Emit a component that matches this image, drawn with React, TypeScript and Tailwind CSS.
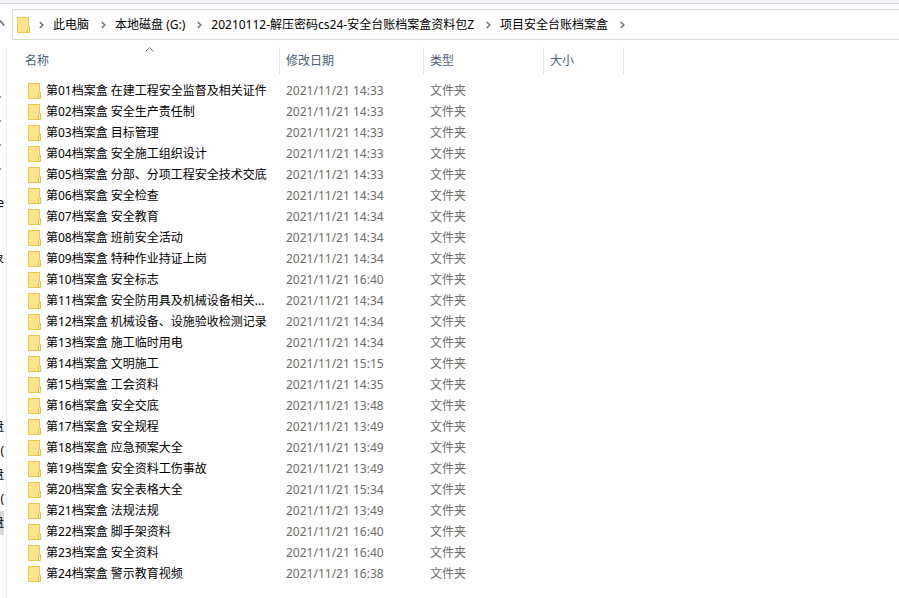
import { useState } from 'react';

const crumbs = ['此电脑', '本地磁盘 (G:)', '20210112-解压密码cs24-安全台账档案盒资料包Z', '项目安全台账档案盒'];

const folders = [
  { name: '第01档案盒 在建工程安全监督及相关证件', date: '2021/11/21 14:33' },
  { name: '第02档案盒 安全生产责任制', date: '2021/11/21 14:33' },
  { name: '第03档案盒 目标管理', date: '2021/11/21 14:33' },
  { name: '第04档案盒 安全施工组织设计', date: '2021/11/21 14:33' },
  { name: '第05档案盒 分部、分项工程安全技术交底', date: '2021/11/21 14:33' },
  { name: '第06档案盒 安全检查', date: '2021/11/21 14:34' },
  { name: '第07档案盒 安全教育', date: '2021/11/21 14:34' },
  { name: '第08档案盒 班前安全活动', date: '2021/11/21 14:34' },
  { name: '第09档案盒 特种作业持证上岗', date: '2021/11/21 14:34' },
  { name: '第10档案盒 安全标志', date: '2021/11/21 16:40' },
  { name: '第11档案盒 安全防用具及机械设备相关...', date: '2021/11/21 14:34' },
  { name: '第12档案盒 机械设备、设施验收检测记录', date: '2021/11/21 14:34' },
  { name: '第13档案盒 施工临时用电', date: '2021/11/21 14:34' },
  { name: '第14档案盒 文明施工', date: '2021/11/21 15:15' },
  { name: '第15档案盒 工会资料', date: '2021/11/21 14:35' },
  { name: '第16档案盒 安全交底', date: '2021/11/21 13:48' },
  { name: '第17档案盒 安全规程', date: '2021/11/21 13:49' },
  { name: '第18档案盒 应急预案大全', date: '2021/11/21 13:49' },
  { name: '第19档案盒 安全资料工伤事故', date: '2021/11/21 13:49' },
  { name: '第20档案盒 安全表格大全', date: '2021/11/21 15:34' },
  { name: '第21档案盒 法规法规', date: '2021/11/21 13:49' },
  { name: '第22档案盒 脚手架资料', date: '2021/11/21 16:40' },
  { name: '第23档案盒 安全资料', date: '2021/11/21 16:40' },
  { name: '第24档案盒 警示教育视频', date: '2021/11/21 16:38' },
];

function FolderIcon() {
  return (
    <svg width="13" height="16" viewBox="0 0 13 16" className="shrink-0" aria-hidden="true">
      <rect x="0.5" y="0.5" width="11" height="15" fill="#ffe48f" stroke="#ebc750" />
      <path d="M10.5 15.5V10.5L11.5 9.5H12.5V15.5Z" fill="#ffe9a6" stroke="#e8bf3c" />
    </svg>
  );
}

function Chevron() {
  return (
    <svg width="5" height="8" viewBox="0 0 5 8" className="shrink-0" aria-hidden="true">
      <path d="M0.8 1L3.8 4L0.8 7" fill="none" stroke="#707070" strokeWidth="1.5" />
    </svg>
  );
}

// The navigation pane is collapsed, only the right edge of its labels shows
function NavItem({ label, active = false }: { label: string; active?: boolean }) {
  return (
    <li className={`flex h-6 items-center justify-end overflow-hidden whitespace-nowrap ${active ? 'bg-[#d9d9d9]' : ''}`}>
      <span>{label}</span>
    </li>
  );
}

function Pin() {
  return (
    <li className="flex h-6 items-center">
      <span className="h-0.5 w-px bg-[#9a9a9a]" />
    </li>
  );
}

export default function App() {
  const [descending, setDescending] = useState(false);
  const rows = descending ? [...folders].reverse() : folders;

  return (
    <div className="flex min-h-screen flex-col bg-white font-['Noto_Sans','Noto_Sans_CJK_SC',sans-serif] text-xs text-black">
      <div className="h-1 border-b border-[#d5d7da] bg-[#f4f5f9]" />

      <header className="mt-[5px] flex">
        <button type="button" aria-label="上移" className="flex w-3 shrink-0 items-center">
          <svg width="5" height="8" viewBox="0 0 5 8" className="-mt-1" aria-hidden="true">
            <path d="M0 1.5L4.2 6.5" fill="none" stroke="#6b6b6b" strokeWidth="1.6" />
          </svg>
        </button>
        <nav aria-label="地址" className="flex h-[31px] min-w-0 flex-1 items-center gap-[9px] overflow-hidden border-y border-l border-[#d9d9d9] pl-1 whitespace-nowrap">
          <FolderIcon />
          <Chevron />
          {crumbs.map((crumb) => (
            <span key={crumb} className="flex items-center gap-3">
              <button type="button">{crumb}</button>
              <Chevron />
            </span>
          ))}
        </nav>
      </header>

      <div className="mt-[7px] flex flex-1">
        <aside className="w-[7px] shrink-0 border-r border-[#f0f0f0] pt-[38px] pr-0.5">
          <ul>
            <Pin />
            <Pin />
            <Pin />
            <Pin />
          </ul>
          <ul className="mt-2.5">
            <NavItem label="OneDrive" />
          </ul>
          <ul className="mt-8">
            <NavItem label="3D 对象" />
          </ul>
          <ul className="mt-36">
            <NavItem label="本地磁盘" />
            <NavItem label="(" />
            <NavItem label="本地磁盘" />
            <NavItem label="(" />
            <NavItem label="本地磁盘" active />
          </ul>
        </aside>

        <main className="min-w-0 flex-1">
          <table className="w-full table-fixed border-separate border-spacing-0 text-left">
            <colgroup>
              <col className="w-[273px]" />
              <col className="w-36" />
              <col className="w-30" />
              <col className="w-20" />
              <col />
            </colgroup>
            <thead className="text-[#4c607a]">
              <tr className="h-[27px]">
                <th className="relative border-r border-[#e5e5e5] p-0 pl-[18px] font-normal">
                  <button type="button" onClick={() => setDescending(!descending)}>
                    名称
                  </button>
                  <svg width="9" height="5" viewBox="0 0 9 5" className="absolute top-0 left-1/2 ml-0.5" aria-hidden="true">
                    <path d="M0.5 4.5L4.5 0.7L8.5 4.5" fill="none" stroke="#707070" />
                  </svg>
                </th>
                <th className="border-r border-[#e5e5e5] p-0 pl-1.5 font-normal">修改日期</th>
                <th className="border-r border-[#e5e5e5] p-0 pl-1.5 font-normal">类型</th>
                <th className="border-r border-[#e5e5e5] p-0 pl-1.5 font-normal">大小</th>
                <td />
              </tr>
            </thead>
            <tbody className="text-[#6d6d6d] before:block before:h-1.5">
              {rows.map((folder) => (
                <tr key={folder.name} className="h-[21px] hover:bg-[#e5f3ff]">
                  <td className="p-0 pl-[21px]">
                    <span className="flex h-4 items-center gap-[5px] whitespace-nowrap text-black">
                      <FolderIcon />
                      {folder.name}
                    </span>
                  </td>
                  <td className="p-0 pl-1.5">{folder.date}</td>
                  <td className="p-0 pl-1.5">文件夹</td>
                  <td />
                  <td />
                </tr>
              ))}
            </tbody>
          </table>
        </main>
      </div>
    </div>
  );
}
